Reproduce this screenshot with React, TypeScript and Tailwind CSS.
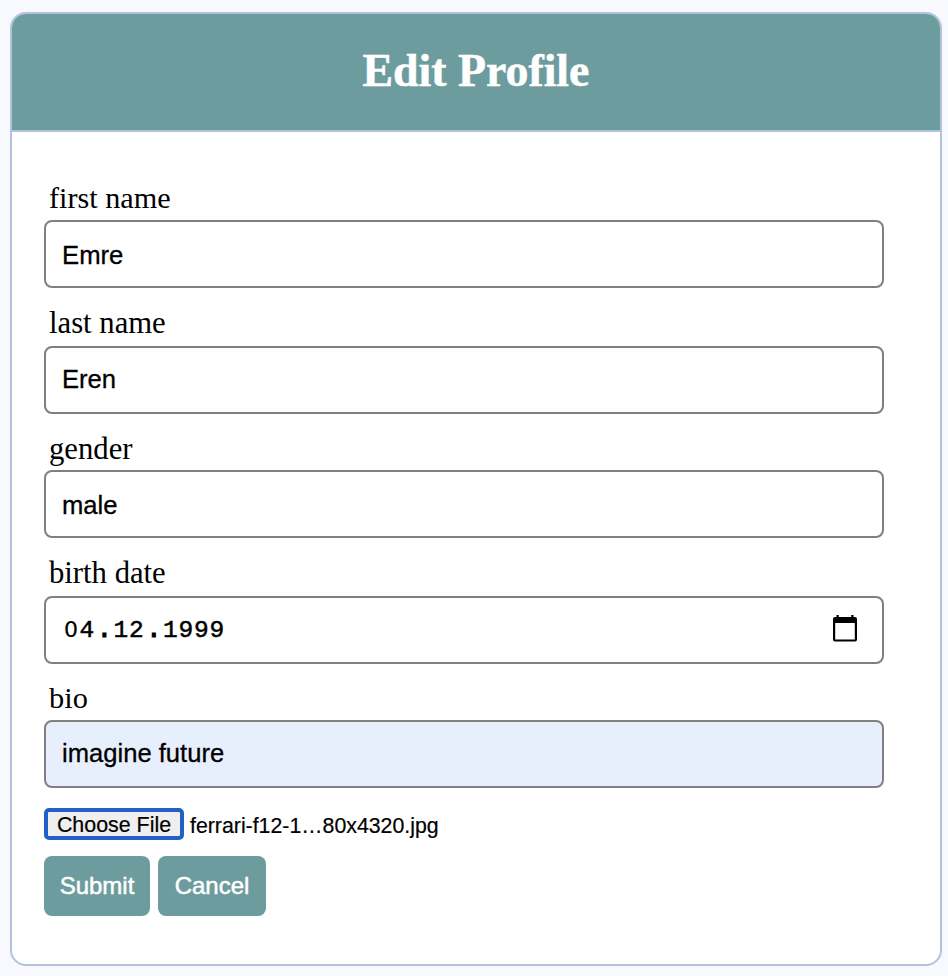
import React from "react";

const sans = "font-['Liberation_Sans',Arial,sans-serif]";

type FieldProps = {
  label: string;
  labelClass: string;
  boxClass?: string;
  children: React.ReactNode;
};

function Field({ label, labelClass, boxClass = "bg-white", children }: FieldProps) {
  return (
    <label className="block">
      <span className={`block whitespace-nowrap pl-[5px] leading-9 ${labelClass}`}>{label}</span>
      <span className={`flex h-[68px] w-[840px] items-center rounded-lg border-2 border-[#808080] ${boxClass}`}>
        {children}
      </span>
    </label>
  );
}

function TextValue({ value, className }: { value: string; className: string }) {
  return (
    <span className={`ml-4 leading-8 [-webkit-text-stroke:0.3px_black] ${sans} ${className}`}>{value}</span>
  );
}

function DateDot() {
  return <span className="inline-block w-[18.500px] text-center text-[27px] leading-8 tracking-normal [-webkit-text-stroke:1px_black]">.</span>;
}

function CalendarIcon() {
  return (
    <svg className="mr-[24px] mb-[2px] ml-auto h-[28px] w-[26px]" viewBox="0 0 26 28" fill="none">
      <path d="M4.500 0h2.300v2h12.400V0h2.300v2H23a2 2 0 0 1 2 2v20.500a2 2 0 0 1-2 2H3a2 2 0 0 1-2-2V4a2 2 0 0 1 2-2h1.500zM3.200 8v16.500h19.600V8z" fill="black" fillRule="evenodd" />
    </svg>
  );
}

export default function App() {
  return (
    <div className="h-[976px] w-[948px] bg-[#f8f8ff] pt-3 pl-[10px] font-['Liberation_Serif',Times,serif] text-black">
      <main className="h-[954px] w-[932px] overflow-hidden rounded-2xl border-2 border-[#b3c3de] bg-white">
        <header className="flex h-[118px] items-center justify-center border-b-2 border-[#b3c3de] bg-[#6d9c9e] pb-[3px]">
          <h3 className="text-[45.800px] leading-[54px] font-bold text-white [-webkit-text-stroke:0.5px_white]">Edit Profile</h3>
        </header>
        <form className="px-8">
          <Field label="first name" labelClass="pt-[48px] pb-[4px] text-[30.2px]">
            <TextValue value="Emre" className="pt-[2px] text-[25.700px]" />
          </Field>
          <Field label="last name" labelClass="pt-[17px] pb-[5px] text-[30.7px]">
            <TextValue value="Eren" className="pb-[2px] text-[25.600px]" />
          </Field>
          <Field label="gender" labelClass="pt-[17px] pb-[3px] text-[30.7px]">
            <TextValue value="male" className="pt-[2px] text-[25.600px]" />
          </Field>
          <Field label="birth date" labelClass="pt-[17px] pb-[5px] text-[30.7px]">
            <span className="ml-[18px] flex items-baseline font-['Liberation_Mono',monospace] text-[24.500px] leading-8 tracking-[0.8px] [-webkit-text-stroke:0.5px_black]">
              <span className="inline-block w-[15.500px] font-['DejaVu_Sans',sans-serif] text-[22px] tracking-normal [-webkit-text-stroke:0.2px_black]">0</span>
              4
              <DateDot />
              12
              <DateDot />
              1999
            </span>
            <CalendarIcon />
          </Field>
          <Field label="bio" labelClass="pt-[16px] pb-[4px] text-[30.4px]" boxClass="bg-[#e8effc]">
            <TextValue value="imagine future" className="pb-[2px] text-[25.600px]" />
          </Field>
          <div className={`mt-5 flex h-8 items-center ${sans}`}>
            <button type="button" className="flex h-8 w-[140px] items-center justify-center rounded-[5px] border-4 border-[#2160c9] bg-[#efefef] pt-[2px] text-[21.400px] leading-6 whitespace-nowrap [-webkit-text-stroke:0.2px_black]">
              Choose File
            </button>
            <span className="ml-[6px] pt-[3px] text-[21.300px] leading-6 whitespace-nowrap [-webkit-text-stroke:0.2px_black]">ferrari-f12-1…80x4320.jpg</span>
          </div>
          <div className={`mt-4 flex gap-2 text-[24px] text-white [-webkit-text-stroke:0.5px_white] ${sans}`}>
            <button type="button" className="h-[60px] w-[106px] rounded-lg bg-[#6d9c9e]">Submit</button>
            <button type="button" className="h-[60px] w-[108px] rounded-lg bg-[#6d9c9e]">Cancel</button>
          </div>
        </form>
      </main>
    </div>
  );
}
